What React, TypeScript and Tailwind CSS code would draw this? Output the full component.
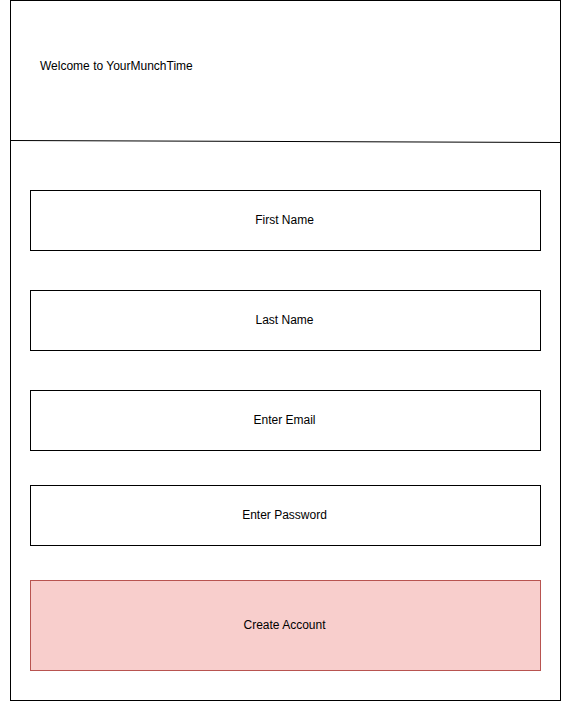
import React from "react";

const Field = ({ label, className = "" }: { label: string; className?: string }) => (
  <div
    className={`mx-[19px] h-[61px] pb-[2px] pr-[2px] border border-black flex items-center justify-center text-[12px] text-black ${className}`}
  >
    {label}
  </div>
);

export default function App() {
  return (
    <div
      className="w-[563px] h-[701px] bg-white"
      style={{ fontFamily: '"Liberation Sans", Arial, Helvetica, sans-serif' }}
    >
      <div className="ml-[10px] w-[551px] h-[701px] border border-black flex flex-col">
        <div className="h-[139px] pl-[29px] pt-[58px] text-[12px] leading-[14px] text-black">
          Welcome to YourMunchTime
        </div>
        <svg width="550" height="3" className="block" viewBox="0 0 550 3">
          <line x1="0" y1="0.5" x2="550" y2="2.5" stroke="#000" strokeWidth="1" />
        </svg>
        <div className="pt-[47px] flex flex-col">
          <Field label="First Name" />
          <Field label="Last Name" className="mt-[39px]" />
          <Field label="Enter Email" className="mt-[39px]" />
          <Field label="Enter Password" className="mt-[34px]" />
          <div className="mx-[19px] mt-[34px] h-[91px] pb-[2px] pr-[2px] border border-[#b85450] bg-[#f8cecc] flex items-center justify-center text-[12px] text-black">
            Create Account
          </div>
        </div>
      </div>
    </div>
  );
}
